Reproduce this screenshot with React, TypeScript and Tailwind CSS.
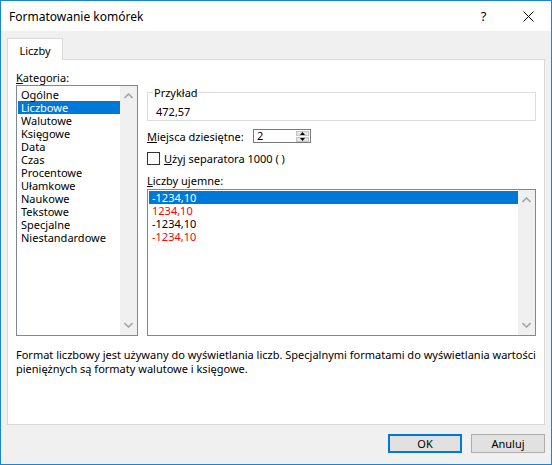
const categories = [
  "Ogólne",
  "Liczbowe",
  "Walutowe",
  "Księgowe",
  "Data",
  "Czas",
  "Procentowe",
  "Ułamkowe",
  "Naukowe",
  "Tekstowe",
  "Specjalne",
  "Niestandardowe",
];

const negatives = [
  { text: "-1234,10", red: false },
  { text: "1234,10", red: true },
  { text: "-1234,10", red: false },
  { text: "-1234,10", red: true },
];

function Chevron({ up }: { up?: boolean }) {
  return (
    <svg width="9" height="6" viewBox="0 0 9 6" className="block">
      <polyline
        points={up ? "0.5,5 4.5,1 8.5,5" : "0.5,1 4.5,5 8.5,1"}
        fill="none"
        stroke="#a6a6a6"
        strokeWidth="1.6"
      />
    </svg>
  );
}

function ScrollBar() {
  return (
    <div className="flex w-[17px] flex-col items-center justify-between bg-[#f0f0f0] py-[7px]">
      <Chevron up />
      <Chevron />
    </div>
  );
}

export default function App() {
  return (
    <div className="flex h-[465px] w-[552px] flex-col border border-[#1883d7] bg-[#f0f0f0] font-['Noto_Sans',sans-serif] text-[11px] leading-[13px] text-black">
      {/* title bar */}
      <div className="flex h-[30px] items-center bg-white">
        <span className="pl-[8px] text-[12px]">Formatowanie komórek</span>
        <div className="ml-auto flex h-full w-[45px] items-center justify-center text-[13px]">?</div>
        <div className="flex h-full w-[45px] items-center justify-center">
          <svg width="11" height="11" viewBox="0 0 11 11">
            <path d="M0.5 0.5 L10.5 10.5 M10.5 0.5 L0.5 10.5" stroke="#000" strokeWidth="1" />
          </svg>
        </div>
      </div>

      <div className="px-[6px] pt-[7px]">
        {/* tab */}
        <div className="flex">
          <div className="relative z-10 -mb-px flex h-[22px] w-[56px] items-center justify-center border border-b-0 border-[#d9d9d9] bg-white pt-[2px]">
            Liczby
          </div>
        </div>

        {/* panel */}
        <div className="flex h-[366px] flex-col border border-[#d9d9d9] bg-white pl-[8px] pr-[6px] pt-[10px]">
          <div className="grid grid-cols-[122px_389px] gap-x-[9px]">
            <div className="flex flex-col">
              <div className="h-[15px] leading-[15px]">
                <span className="underline">K</span>ategoria:
              </div>
              <div className="flex h-[251px] border border-[#828790] bg-white">
                <div className="flex-1 pl-px pt-[2px]">
                  {categories.map((c, i) => (
                    <div
                      key={c}
                      className={
                        i === 1
                          ? "h-[13px] bg-[#0078d7] pl-[3px] text-white"
                          : "h-[13px] pl-[3px]"
                      }
                    >
                      {c}
                    </div>
                  ))}
                </div>
                <ScrollBar />
              </div>
            </div>

            <div className="flex flex-col pt-[15px]">
              <fieldset className="border border-[#dcdcdc]">
                <legend className="ml-[5px] px-px leading-[15px]">Przykład</legend>
                <div className="pb-px pl-[8px] pt-[5px] leading-[14px]">472,57</div>
              </fieldset>

              <div className="mt-[8px] flex items-center">
                <span className="w-[106px]">
                  <span className="underline">M</span>iejsca dziesiętne:
                </span>
                <div className="flex h-[14px] w-[58px] border border-[#7a7a7a] bg-white">
                  <span className="flex-1 pl-[3px] leading-[12px]">2</span>
                  <div className="my-px mr-px flex w-[13px] flex-col gap-px">
                    <div className="flex flex-1 items-center justify-center border border-[#c4c4c4] bg-[#e6e6e6]">
                      <svg width="5" height="3" viewBox="0 0 5 3"><path d="M0 3 L2.5 0 L5 3 Z" fill="#000" /></svg>
                    </div>
                    <div className="flex flex-1 items-center justify-center border border-[#c4c4c4] bg-[#e6e6e6]">
                      <svg width="5" height="3" viewBox="0 0 5 3"><path d="M0 0 L2.5 3 L5 0 Z" fill="#000" /></svg>
                    </div>
                  </div>
                </div>
              </div>

              <div className="mt-[9px] flex items-center gap-[4px]">
                <div className="h-[13px] w-[13px] border border-[#333333] bg-white" />
                <span>
                  <span className="underline">U</span>żyj separatora 1000 ( )
                </span>
              </div>

              <div className="mt-[8px] h-[15px] leading-[15px]">
                <span className="underline">L</span>iczby ujemne:
              </div>
              <div className="mt-px flex h-[147px] border border-[#828790] bg-white">
                <div className="flex-1 pl-px pt-px">
                  {negatives.map((n, i) => (
                    <div
                      key={i}
                      className={
                        i === 0
                          ? "h-[13px] bg-[#0078d7] pl-[3px] text-white"
                          : n.red
                            ? "h-[13px] pl-[3px] text-[#ff0000]"
                            : "h-[13px] pl-[3px]"
                      }
                    >
                      {n.text}
                    </div>
                  ))}
                </div>
                <ScrollBar />
              </div>
            </div>
          </div>

          <p className="mt-[12px] w-[520px] leading-[14px]">
            Format liczbowy jest używany do wyświetlania liczb. Specjalnymi formatami do wyświetlania wartości
            pieniężnych są formaty walutowe i księgowe.
          </p>
        </div>

        {/* buttons */}
        <div className="mt-[9px] flex justify-end gap-[9px]">
          <button
            type="button"
            className="h-[19px] w-[74px] border-2 border-[#0078d7] bg-[#e1e1e1] leading-[13px]"
          >
            OK
          </button>
          <button
            type="button"
            className="h-[19px] w-[74px] border border-[#adadad] bg-[#e1e1e1] leading-[13px]"
          >
            Anuluj
          </button>
        </div>
      </div>
    </div>
  );
}
